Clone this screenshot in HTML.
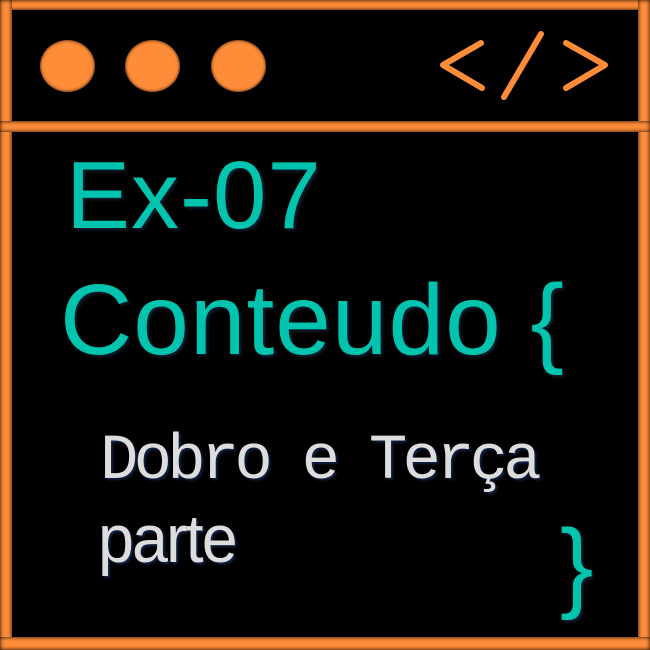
<!DOCTYPE html>
<html><head><meta charset="utf-8"><style>
html,body{margin:0;padding:0;background:#000;}
#c{position:relative;width:650px;height:650px;background:#000;overflow:hidden;font-family:"Liberation Sans",sans-serif;}
.bar{position:absolute;background:#ff8c38;box-shadow:0 0 4px #000 inset;}
.dot{position:absolute;width:55px;height:52px;border-radius:50%;background:#ff8c38;box-shadow:0 0 3px #000 inset;}
.t{position:absolute;white-space:nowrap;line-height:1;}
.teal{color:#00c4ae;text-shadow:2px 2px 3px #123;}
</style></head><body><div id="c">
<div class="bar" style="left:0;top:0;width:650px;height:10px;"></div>
<div class="bar" style="left:0;top:0;width:12px;height:650px;"></div>
<div class="bar" style="left:638px;top:0;width:12px;height:650px;"></div>
<div class="bar" style="left:0;top:637px;width:650px;height:13px;"></div>
<div class="bar" style="left:0;top:121px;width:650px;height:11px;"></div>
<div class="dot" style="left:40px;top:40px;"></div>
<div class="dot" style="left:125px;top:40px;"></div>
<div class="dot" style="left:211px;top:40px;"></div>
<svg style="position:absolute;left:0;top:0" width="650" height="130">
<g stroke="#ff8c38" stroke-width="6" stroke-linecap="round" fill="none" stroke-linejoin="round">
<polyline points="481,43 443,65 482,88"/>
<line x1="541" y1="34" x2="504" y2="97"/>
<polyline points="566,43 605,65 566,88"/>
</g></svg>
<div class="t teal" style="left:66px;top:148px;font-size:96px;letter-spacing:1px;">Ex-07</div>
<div class="t teal" style="left:60px;top:270px;font-size:100px;letter-spacing:1px;">Conteudo {</div>
<div class="t" style="left:100px;top:430px;font-family:'Liberation Mono',monospace;font-size:64px;letter-spacing:-4.8px;color:#ddd;text-shadow:2px 2px 2px #124;">Dobro e Terça</div>
<div class="t" style="left:98px;top:505px;font-size:68px;color:#ddd;letter-spacing:-2px;transform:scaleX(0.95);transform-origin:left;text-shadow:2px 2px 2px #124;">parte</div>
<div class="t teal" style="left:560px;top:515px;font-size:100px;">}</div>
</div></body></html>
